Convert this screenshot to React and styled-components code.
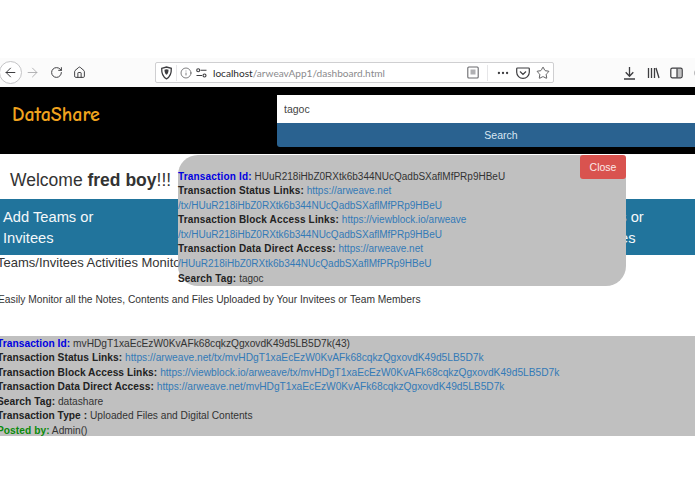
import React from "react";
import styled, { createGlobalStyle } from "styled-components";
import { ArrowLeft, ArrowRight, RotateCw, Home, Info, Star, Ellipsis } from "lucide-react";

const GlobalStyle = createGlobalStyle`
  html, body {
    margin: 0;
    padding: 0;
    background: #fff;
    overflow: hidden;
  }
  body {
    font-family: "Liberation Sans", Arial, sans-serif;
    font-size: 10px;
    color: #333;
  }
`;

const Page = styled.div`
  position: relative;
  width: 695px;
  height: 494px;
  padding-top: 58px;
  box-sizing: border-box;
  overflow: hidden;
`;

const Toolbar = styled.div`
  height: 29px;
  background: #fbfbfb;
  display: flex;
  align-items: center;
  box-sizing: border-box;
  color: #3d3d40;
  overflow: hidden;
`;

const NavGroup = styled.div`
  width: 155px;
  display: flex;
  align-items: center;
  flex: none;
`;

const BackButton = styled.div`
  width: 23px;
  height: 23px;
  margin-left: -1px;
  border: 1px solid #c4c4c6;
  border-radius: 50%;
  background: #fff;
  display: flex;
  align-items: center;
  justify-content: center;
  box-sizing: border-box;
`;

const NavIcon = styled.span`
  display: flex;
  margin-left: ${(p) => p.$gap}px;
  color: ${(p) => p.$color || "#3d3d40"};
`;

const UrlBar = styled.div`
  width: 399px;
  height: 21px;
  flex: none;
  background: #fff;
  border: 1px solid #cfcfd1;
  border-radius: 2px;
  display: flex;
  align-items: center;
  box-sizing: border-box;
  padding: 0 3px 0 4px;
`;

const UrlDivider = styled.span`
  width: 1px;
  height: 16px;
  background: #e6e6e8;
  margin: 0 ${(p) => p.$right}px 0 ${(p) => p.$left}px;
`;

const Spacer = styled.span`
  width: ${(p) => p.$w}px;
  flex: none;
`;

const UrlText = styled.span`
  flex: 1;
  margin-left: 6px;
  font-size: 10.1px;
  color: #8a8a8d;
  font-family: "Lato", sans-serif;
  b {
    font-weight: 400;
    color: #2b2b2d;
  }
`;

const ToolIcons = styled.div`
  display: flex;
  align-items: center;
  gap: 10.5px;
  margin-left: 69px;
  flex: none;
`;

const Header = styled.header`
  height: 67px;
  background: #000;
  display: flex;
  align-items: flex-start;
`;

const Brand = styled.div`
  width: 277px;
  flex: none;
  padding: 16px 0 0 12px;
  box-sizing: border-box;
  font-family: "Comic Neue", "Comic Sans MS", "Lato", sans-serif;
  font-size: 20px;
  font-weight: 700;
  color: #f0a31e;
`;

const SearchForm = styled.form`
  width: 448px;
  flex: none;
  margin: 8px 0 0;
  display: flex;
  flex-direction: column;
`;

const SearchInput = styled.input`
  height: 28px;
  border: 0;
  outline: 0;
  padding: 0 7px;
  font: 10.5px "Liberation Sans", sans-serif;
  color: #444;
  background: #fff;
`;

const SearchButton = styled.button`
  height: 24px;
  border: 0;
  padding: 0;
  border-radius: 0 0 0 3px;
  background: #2a6290;
  color: #d8e6f2;
  font: 10.5px "Liberation Sans", sans-serif;
`;

const Welcome = styled.h1`
  margin: 0;
  height: 45px;
  padding: 14.5px 0 0 10px;
  box-sizing: border-box;
  font-size: 17.5px;
  line-height: 22px;
  font-weight: 400;
  color: #333;
`;

const Band = styled.div`
  height: 56px;
  background: #21749c;
  display: flex;
  justify-content: space-between;
`;

const BandItem = styled.div`
  width: 140px;
  padding: 8px 0 0 3px;
  box-sizing: border-box;
  font-size: 14.7px;
  line-height: 20.5px;
  color: #f4f8fa;
`;

const ActivityHead = styled.h2`
  margin: 0 0 0 -3px;
  padding-top: 1px;
  box-sizing: border-box;
  height: 36px;
  font-size: 13px;
  line-height: 14px;
  font-weight: 400;
  color: #333;
  white-space: nowrap;
`;

const ActivityNote = styled.p`
  margin: 0 0 0 -2px;
  height: 45px;
  padding-top: 2px;
  box-sizing: border-box;
  font-size: 10.25px;
  line-height: 14px;
  color: #333;
`;

const Feed = styled.section`
  height: 100px;
  background: #c0c0c0;
  overflow: hidden;
`;

const FeedRows = styled.div`
  margin-left: -3px;
  padding-top: 0.5px;
  font-size: 10.2px;
  b {
    letter-spacing: 0.05px;
  }
`;

const Row = styled.div`
  line-height: 14.6px;
  white-space: nowrap;
  color: #333;
`;

const Label = styled.b`
  color: ${(p) => p.$color || "#222"};
  letter-spacing: 0.17px;
`;

const Link = styled.a`
  color: #337ab7;
  text-decoration: none;
`;

const Modal = styled.aside`
  position: absolute;
  left: 178px;
  top: 155px;
  width: 448px;
  height: 131px;
  background: #c0c0c0;
  border-radius: 20px;
  box-sizing: border-box;
  padding-top: 14.5px;
`;

const CloseButton = styled.button`
  position: absolute;
  right: 0;
  top: 0;
  width: 46px;
  height: 24px;
  border: 0;
  padding: 0;
  border-radius: 3px;
  background: #d9534f;
  color: #fbe9e8;
  font: 10.5px "Liberation Sans", sans-serif;
`;

const ReaderIcon = () => (
  <svg width="12" height="13" viewBox="0 0 12 13" fill="none" stroke="#6a6a6e" strokeWidth="1.1">
    <rect x=".8" y="1" width="10.4" height="11" rx="1" />
    <rect x="3.5" y="3.5" width="5" height="5" fill="#b0b0b3" stroke="none" />
  </svg>
);

const ShieldIcon = () => (
  <svg width="13" height="14" viewBox="0 0 13 14" fill="none" stroke="#3d3d40" strokeWidth="1.3">
    <path d="M1.7 2.3 6.5 1l4.8 1.3c.2 4.8-1 8.6-4.8 10.5C2.7 10.9 1.5 7.1 1.7 2.3Z" />
    <path d="M4.5 3.8 6.5 3.3l2 .5c0 2.5-.5 4-2 5-1.500-1-2-2.500-2-5Z" fill="#3d3d40" stroke="none" />
  </svg>
);

const PermissionIcon = () => (
  <svg width="11" height="10" viewBox="0 0 11 10" fill="none" stroke="#3d3d40" strokeWidth="1.1">
    <circle cx="2.2" cy="2.2" r="1.5" />
    <path d="M4.5 2.2h6M.5 7.5h5.500" />
    <circle cx="8.5" cy="7.5" r="1.5" />
  </svg>
);

const PocketIcon = () => (
  <svg width="14" height="14" viewBox="0 0 14 14" fill="none" stroke="#3d3d40" strokeWidth="1.2">
    <path d="M1.5 2h11c.5 0 .8.3.8.8v3.500c0 3.400-2.800 6-6.300 6S.7 9.700.7 6.300V2.800c0-.5.3-.8.8-.8Z" />
    <path d="m4.3 5.800 2.700 2.600 2.700-2.600" strokeLinecap="round" />
  </svg>
);

const DownloadIcon = () => (
  <svg width="13" height="14" viewBox="0 0 13 14" fill="none" stroke="#3d3d40" strokeWidth="1.3">
    <path d="M6.5 1v9M2.700 6.300l3.800 3.900 3.800-3.900M1 13h11" />
  </svg>
);

const LibraryIcon = () => (
  <svg width="13" height="14" viewBox="0 0 13 14" fill="none" stroke="#3d3d40" strokeWidth="1.3">
    <path d="M1.5 2v10M4.500 2v10M7.500 2v10M9 2l3 10" />
  </svg>
);

const SidebarIcon = () => (
  <svg width="13" height="14" viewBox="0 0 13 14" fill="none" stroke="#3d3d40" strokeWidth="1.2">
    <rect x=".8" y="2.2" width="11.4" height="9.6" rx="1.5" />
    <path d="M7 3h4.500v8H7Z" fill="#3d3d40" fillOpacity=".3" stroke="none" />
    <path d="M7 2.500v9" />
  </svg>
);

const AccountIcon = () => (
  <svg width="13" height="14" viewBox="0 0 13 14" fill="none" stroke="#8a8a8d" strokeWidth="1.2">
    <circle cx="6.5" cy="7" r="5.500" />
  </svg>
);

const txId = "HUuR218iHbZ0RXtk6b344NUcQadbSXaflMfPRp9HBeU";
const feedId = "mvHDgT1xaEcEzW0KvAFk68cqkzQgxovdK49d5LB5D7k";

const App = () => (
  <>
    <GlobalStyle />
    <Page>
      <Toolbar>
        <NavGroup>
          <BackButton><ArrowLeft size={15} strokeWidth={1.6} /></BackButton>
          <NavIcon $gap={3} $color="#a9a9ac"><ArrowRight size={15} strokeWidth={1.4} /></NavIcon>
          <NavIcon $gap={10}><RotateCw size={13} strokeWidth={1.8} /></NavIcon>
          <NavIcon $gap={10}><Home size={13} strokeWidth={1.8} /></NavIcon>
        </NavGroup>
        <UrlBar>
          <ShieldIcon />
          <UrlDivider $left={3} $right={3} />
          <Info size={12} strokeWidth={1.3} color="#3d3d40" />
          <Spacer $w={4} />
          <PermissionIcon />
          <UrlText><b>localhost</b>/arweavApp1/dashboard.html</UrlText>
          <ReaderIcon />
          <UrlDivider $left={8} $right={8} />
          <Ellipsis size={14} color="#3d3d40" />
          <Spacer $w={6} />
          <PocketIcon />
          <Spacer $w={6} />
          <Star size={14} strokeWidth={1.4} color="#3d3d40" />
        </UrlBar>
        <ToolIcons>
          <DownloadIcon />
          <LibraryIcon />
          <SidebarIcon />
          <AccountIcon />
        </ToolIcons>
      </Toolbar>
      <Header>
        <Brand>DataShare</Brand>
        <SearchForm onSubmit={(e) => e.preventDefault()}>
          <SearchInput defaultValue="tagoc" />
          <SearchButton type="button">Search</SearchButton>
        </SearchForm>
      </Header>
      <Welcome>Welcome <b>fred boy</b>!!!</Welcome>
      <Band>
        <BandItem>Add Teams or<br />Invitees</BandItem>
        <BandItem>Add Notes or<br />All Activities</BandItem>
      </Band>
      <ActivityHead>Teams/Invitees Activities Monitoring</ActivityHead>
      <ActivityNote>Easily Monitor all the Notes, Contents and Files Uploaded by Your Invitees or Team Members</ActivityNote>
      <Feed>
        <FeedRows>
          <Row><Label $color="#0000e0">Transaction Id:</Label> {feedId}(43)</Row>
          <Row><Label>Transaction Status Links:</Label> <Link>https://arweave.net/tx/{feedId}</Link></Row>
          <Row><Label>Transaction Block Access Links:</Label> <Link>https://viewblock.io/arweave/tx/{feedId}</Link></Row>
          <Row><Label>Transaction Data Direct Access:</Label> <Link>https://arweave.net/{feedId}</Link></Row>
          <Row><Label>Search Tag:</Label> datashare</Row>
          <Row><Label>Transaction Type :</Label> Uploaded Files and Digital Contents</Row>
          <Row><Label $color="#0a8a0a">Posted by:</Label> Admin()</Row>
        </FeedRows>
      </Feed>
      <Modal>
        <CloseButton type="button">Close</CloseButton>
        <Row><Label $color="#0000e0">Transaction Id:</Label> {txId}</Row>
        <Row><Label>Transaction Status Links:</Label> <Link>https://arweave.net</Link></Row>
        <Row><Link>/tx/{txId}</Link></Row>
        <Row><Label>Transaction Block Access Links:</Label> <Link>https://viewblock.io/arweave</Link></Row>
        <Row><Link>/tx/{txId}</Link></Row>
        <Row><Label>Transaction Data Direct Access:</Label> <Link>https://arweave.net</Link></Row>
        <Row><Link>/{txId}</Link></Row>
        <Row><Label>Search Tag:</Label> tagoc</Row>
      </Modal>
    </Page>
  </>
);

export default App;
